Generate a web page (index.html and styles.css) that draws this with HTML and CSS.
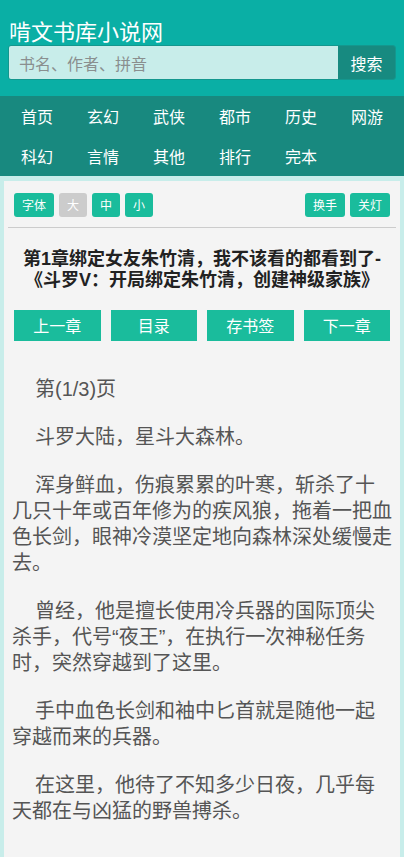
FILE: index.html
```html
<!DOCTYPE html>
<html lang="zh-CN">
<head>
<meta charset="utf-8">
<meta name="viewport" content="width=device-width, initial-scale=1">
<title>啃文书库小说网</title>
<link rel="stylesheet" href="styles.css">
</head>
<body>
<header class="header">
  <div class="logo">啃文书库小说网</div>
  <form class="search">
    <input class="search-input" type="text" placeholder="书名、作者、拼音">
    <button class="search-btn" type="button">搜索</button>
  </form>
</header>
<nav class="nav">
  <a>首页</a><a>玄幻</a><a>武侠</a><a>都市</a><a>历史</a><a>网游</a>
  <a>科幻</a><a>言情</a><a>其他</a><a>排行</a><a>完本</a>
</nav>
<main class="reader">
  <div class="toolbar">
    <div class="tool-group">
      <span class="tool">字体</span>
      <span class="tool tool-off">大</span>
      <span class="tool">中</span>
      <span class="tool">小</span>
    </div>
    <div class="tool-group">
      <span class="tool">换手</span>
      <span class="tool">关灯</span>
    </div>
  </div>
  <h1 class="chapter-title">第1章绑定女友朱竹清，我不该看的都看到了-《斗罗V：开局绑定朱竹清，创建神级家族》</h1>
  <div class="pager">
    <a class="pager-btn">上一章</a>
    <a class="pager-btn">目录</a>
    <a class="pager-btn">存书签</a>
    <a class="pager-btn">下一章</a>
  </div>
  <div class="text">
    <p>第(1/3)页</p>
    <p>斗罗大陆，星斗大森林。</p>
    <p>浑身鲜血，伤痕累累的叶寒，斩杀了十几只十年或百年修为的疾风狼，拖着一把血色长剑，眼神冷漠坚定地向森林深处缓慢走去。</p>
    <p>曾经，他是擅长使用冷兵器的国际顶尖杀手，代号“夜王”，在执行一次神秘任务时，突然穿越到了这里。</p>
    <p>手中血色长剑和袖中匕首就是随他一起穿越而来的兵器。</p>
    <p>在这里，他待了不知多少日夜，几乎每天都在与凶猛的野兽搏杀。</p>
  </div>
</main>
</body>
</html>
```
FILE: styles.css
```css
html, body {
  margin: 0;
  padding: 0;
}
body {
  background: #c8edea;
  font-family: "Noto Sans CJK SC", "Noto Sans", "Liberation Sans", sans-serif;
}
a { text-decoration: none; }

.header {
  background: #0aafa5;
  padding: 15px 8px 16px;
}
.logo {
  color: #fff;
  font-size: 22px;
  line-height: 30px;
  padding-left: 1px;
}
.search {
  display: flex;
  height: 35px;
  margin: 0;
  border: 1px solid #14978e;
  border-radius: 3px;
  overflow: hidden;
  box-sizing: border-box;
}
.search-input {
  flex: 1;
  min-width: 0;
  border: 0;
  outline: 0;
  margin: 0;
  padding: 0 10px;
  background: #c8edea;
  font-family: inherit;
  font-size: 16px;
  color: #555;
}
.search-input::placeholder { color: #8a8f8f; }
.search-btn {
  width: 57px;
  border: 0;
  margin: 0;
  padding: 0;
  background: #178a80;
  color: #fff;
  font-family: inherit;
  font-size: 16px;
}

.nav {
  background: #18897f;
  padding: 0 4px;
  display: grid;
  grid-template-columns: repeat(6, 1fr);
  grid-auto-rows: 40px;
}
.nav a {
  color: #fff;
  font-size: 16px;
  display: flex;
  align-items: center;
  justify-content: center;
}

.reader {
  background: #f4f4f4;
  margin: 5px 4px 0;
  padding: 12px 4px 40px;
}
.toolbar {
  display: flex;
  justify-content: space-between;
  padding: 0 6px 10px;
  border-bottom: 1px solid #cccccc;
}
.tool-group {
  display: flex;
  gap: 5px;
}
.tool {
  height: 24px;
  line-height: 24px;
  padding: 0 8px;
  background: #1abc9c;
  color: #fff;
  font-size: 12px;
  border-radius: 3px;
}
.tool-off { background: #cccccc; }

.chapter-title {
  margin: 21px 0 0;
  padding: 0 10px;
  text-align: center;
  font-family: "Liberation Sans", "Noto Sans CJK SC", sans-serif;
  font-size: 18px;
  font-weight: bold;
  line-height: 21px;
  color: #222;
}
.pager {
  display: grid;
  grid-template-columns: repeat(4, 1fr);
  gap: 10px;
  margin: 19px 6px 0;
}
.pager-btn {
  height: 31px;
  line-height: 31px;
  background: #1abc9c;
  color: #fff;
  font-size: 16px;
  text-align: center;
}

.text {
  padding: 13px 4px 0;
  color: #555;
  font-family: "Liberation Sans", "Noto Sans CJK SC", sans-serif;
  font-size: 20px;
  line-height: 26px;
}
.text p {
  margin: 22px 0;
  text-indent: 23px;
}
```
